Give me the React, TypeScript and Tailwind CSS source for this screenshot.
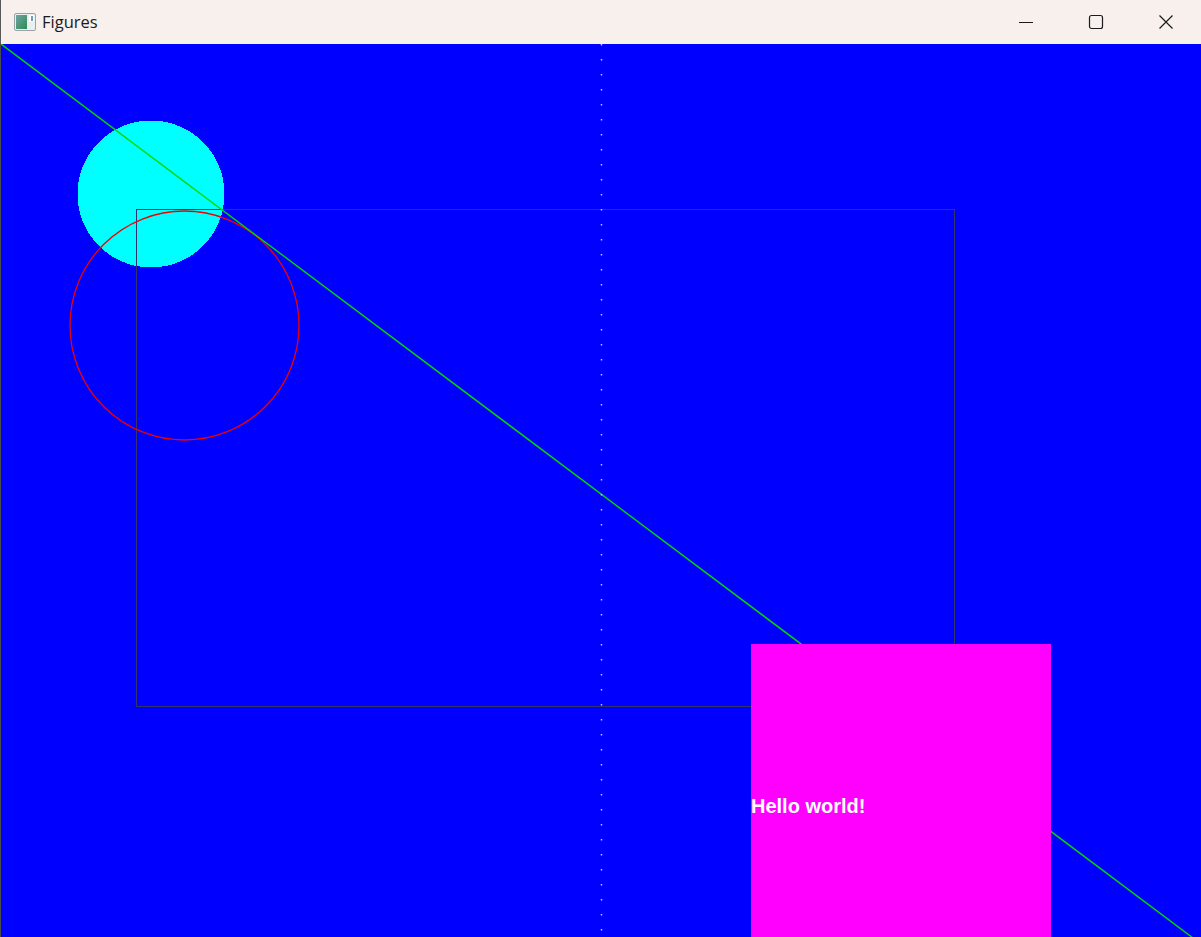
import React from 'react';

const TitleBar: React.FC = () => (
  <div className="h-[44px] shrink-0 flex items-center bg-[#f7f0ed] border-l border-[#5a5a5a]">
    {/* App icon */}
    <svg width="24" height="20" viewBox="0 0 24 20" className="ml-[12px]">
      <defs>
        <linearGradient id="ic" x1="0" y1="0" x2="1" y2="1">
          <stop offset="0" stopColor="#6fa6a8" />
          <stop offset="1" stopColor="#2f8a4e" />
        </linearGradient>
      </defs>
      <rect x="1.5" y="1.5" width="21" height="17" rx="1.5" fill="#e9eef0" stroke="#9aa3a8" />
      <rect x="3" y="3" width="11" height="14" fill="url(#ic)" />
      <rect x="16" y="3" width="5" height="7" fill="#ffffff" />
      <rect x="18" y="4" width="2" height="5" fill="#6aa2b4" />
    </svg>
    <span className="ml-[5px] text-[16.5px] text-[#1b1b1b] font-['Open_Sans','Noto_Sans',sans-serif] leading-none">
      Figures
    </span>
    <div className="ml-auto flex items-center h-full">
      <div className="w-[70px] h-full flex items-center justify-center">
        <svg width="16" height="16" viewBox="0 0 16 16">
          <line x1="1" y1="8.5" x2="15" y2="8.5" stroke="#1b1b1b" strokeWidth="1" />
        </svg>
      </div>
      <div className="w-[70px] h-full flex items-center justify-center">
        <svg width="16" height="16" viewBox="0 0 16 16">
          <rect x="1.5" y="1.5" width="13" height="13" rx="2" fill="none" stroke="#1b1b1b" strokeWidth="1.2" />
        </svg>
      </div>
      <div className="w-[70px] h-full flex items-center justify-center">
        <svg width="16" height="16" viewBox="0 0 16 16">
          <path d="M1.5 1.5 L14.5 14.5 M14.5 1.5 L1.5 14.5" stroke="#1b1b1b" strokeWidth="1.2" fill="none" />
        </svg>
      </div>
    </div>
  </div>
);

const Canvas: React.FC = () => (
  <div className="relative flex-1 bg-[#0000ff] border-l border-[#4a4a4a] overflow-hidden">
    <svg width="1200" height="893" viewBox="0 0 1200 893" className="absolute left-0 top-0">
      {/* filled circle */}
      <circle cx="150" cy="150" r="73.5" fill="#00ffff" shapeRendering="crispEdges" />
      {/* outline rectangle */}
      <rect x="135.5" y="165.5" width="818" height="497" fill="none" stroke="#33336e" strokeWidth="1" shapeRendering="crispEdges" />
      {/* red circle */}
      <circle cx="183.5" cy="281.5" r="114.5" fill="none" stroke="#f00000" strokeWidth="1.3" />
      {/* diagonal line */}
      <line x1="0" y1="0" x2="1200" y2="900" stroke="#00d800" strokeWidth="1.4" />
      {/* dotted vertical */}
      <line x1="600.5" y1="0" x2="600.5" y2="893" stroke="#c4c4ec" strokeWidth="1.5" strokeDasharray="1.5 13.5" />
      {/* magenta square */}
      <rect x="750" y="600" width="300" height="300" fill="#ff00ff" shapeRendering="crispEdges" />
      <text
        x="750"
        y="769"
        fill="#ffffff"
        fontFamily="'Liberation Sans', Arial, sans-serif"
        fontWeight="700"
        fontSize="20"
      >
        Hello world!
      </text>
    </svg>
  </div>
);

export default function App() {
  return (
    <div className="w-[1201px] h-[937px] flex flex-col overflow-hidden">
      <TitleBar />
      <Canvas />
    </div>
  );
}
